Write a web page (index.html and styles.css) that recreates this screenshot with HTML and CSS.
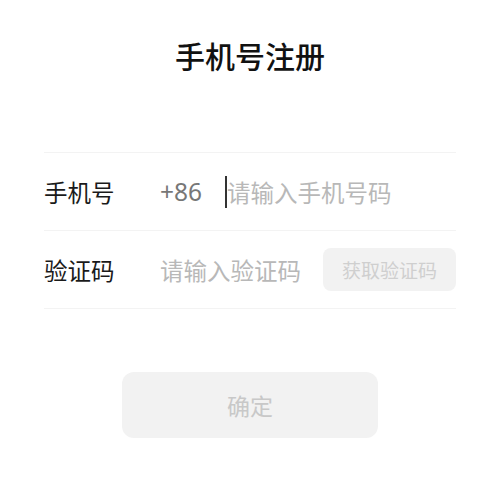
FILE: index.html
```html
<!DOCTYPE html>
<html lang="zh">
<head>
<meta charset="utf-8">
<link rel="stylesheet" href="styles.css">
</head>
<body>
<div class="page">
  <h1 class="title">手机号注册</h1>
  <div class="form">
    <div class="row">
      <span class="label">手机号</span>
      <span class="prefix">+86</span>
      <span class="caret"></span>
      <span class="placeholder">请输入手机号码</span>
    </div>
    <div class="row">
      <span class="label">验证码</span>
      <span class="placeholder code">请输入验证码</span>
      <span class="get-code">获取验证码</span>
    </div>
  </div>
  <div class="actions">
    <span class="submit">确定</span>
  </div>
</div>
</body>
</html>
```
FILE: styles.css
```css
html, body {
  margin: 0;
  padding: 0;
  background: #fff;
}
body {
  font-family: "Noto Sans CJK SC", "Noto Sans", sans-serif;
  width: 500px;
  height: 479px;
  overflow: hidden;
}
.page {
  padding: 0 44px;
}
.title {
  margin: 0;
  padding-top: 35px;
  height: 152px;
  box-sizing: border-box;
  text-align: center;
  font-size: 30px;
  line-height: 40px;
  font-weight: 500;
  color: #111;
}
.form {
  border-top: 1px solid #f3f3f3;
}
.row {
  display: flex;
  align-items: center;
  height: 77px;
  border-bottom: 1px solid #f3f3f3;
}
.label {
  width: 116px;
  font-size: 23.5px;
  color: #1a1a1a;
}
.prefix {
  font-size: 24.5px;
  color: #777;
  width: 66px;
  font-family: "Noto Sans", sans-serif;
}
.caret {
  width: 2px;
  height: 32px;
  background: #333;
  margin-left: -1px;
}
.placeholder {
  font-size: 23.5px;
  color: #b8b8b8;
}
.placeholder.code {
  flex: 1;
}
.get-code {
  width: 133px;
  height: 43px;
  border-radius: 8px;
  background: #f2f2f2;
  color: #cfcfcf;
  font-size: 19px;
  display: flex;
  align-items: center;
  justify-content: center;
}
.actions {
  display: flex;
  justify-content: center;
  padding-top: 63px;
}
.submit {
  width: 256px;
  height: 66px;
  border-radius: 12px;
  background: #f2f2f2;
  color: #c8c8c8;
  font-size: 23px;
  display: flex;
  align-items: center;
  justify-content: center;
}
```
